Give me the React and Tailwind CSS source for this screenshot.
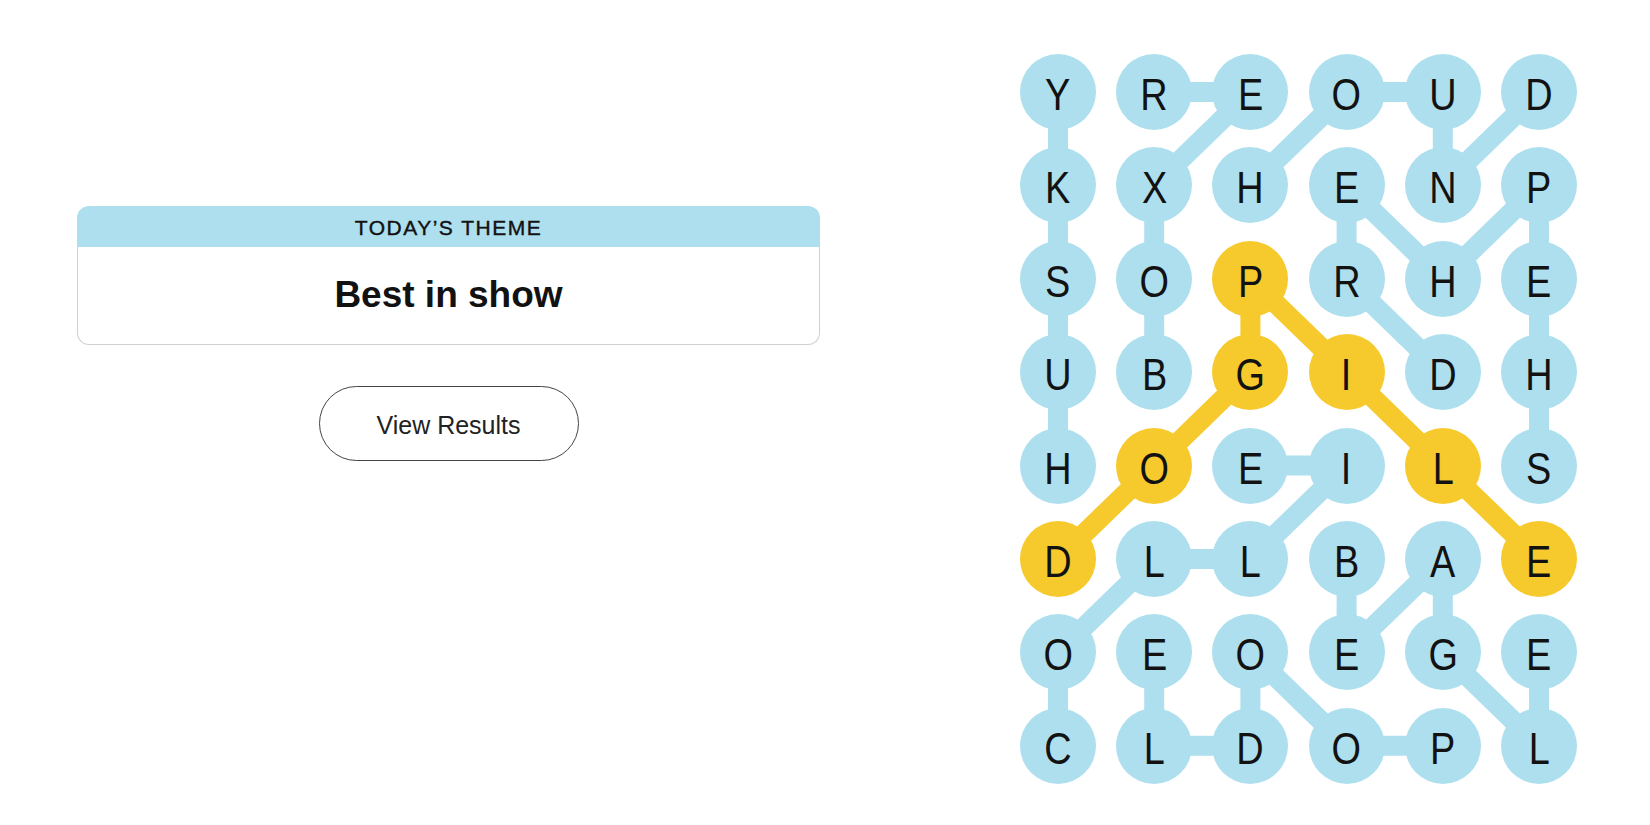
import React from "react";

const ROWS = [
  "YREOUD",
  "KXHENP",
  "SOPRHE",
  "UBGIDH",
  "HOEILS",
  "DLLBAE",
  "OEOEGE",
  "CLDOPL",
];

const BLUE = "#aedfee";
const YELLOW = "#f6ca2c";

const SPAN = new Set(["5,0", "4,1", "3,2", "2,2", "3,3", "4,4", "5,5"]);

const PATHS = [
  { c: BLUE, p: [[0, 0], [1, 0], [2, 0], [3, 0], [4, 0]] },
  { c: BLUE, p: [[0, 1], [0, 2], [1, 1], [2, 1], [3, 1]] },
  { c: BLUE, p: [[1, 2], [0, 3], [0, 4], [1, 4], [0, 5]] },
  { c: BLUE, p: [[4, 5], [3, 5], [2, 5], [1, 5], [2, 4], [1, 3], [2, 3], [3, 4]] },
  { c: BLUE, p: [[7, 0], [6, 0], [5, 1], [5, 2], [4, 3], [4, 2]] },
  { c: BLUE, p: [[5, 3], [6, 3], [5, 4], [6, 4], [7, 5], [6, 5]] },
  { c: BLUE, p: [[7, 4], [7, 3], [6, 2], [7, 2], [7, 1], [6, 1]] },
  { c: YELLOW, p: [[5, 0], [4, 1], [3, 2], [2, 2], [3, 3], [4, 4], [5, 5]] },
];

const PX = 96.2;
const PY = 93.4;
const R = 38;

function Board() {
  const w = 5 * PX + 2 * R;
  const h = 7 * PY + 2 * R;
  return (
    <div className="relative">
      <svg
        className="absolute left-0 top-0"
        width={w}
        height={h}
        viewBox={`0 0 ${w} ${h}`}
      >
        {PATHS.map((path, i) =>
          path.p.slice(1).map((pt, j) => {
            const a = path.p[j];
            return (
              <line
                key={`${i}-${j}`}
                x1={R + a[1] * PX}
                y1={R + a[0] * PY}
                x2={R + pt[1] * PX}
                y2={R + pt[0] * PY}
                stroke={path.c}
                strokeWidth="20"
              />
            );
          })
        )}
      </svg>
      <div className="relative grid grid-cols-[repeat(6,76px)] gap-x-[20.2px] gap-y-[17.4px]">
        {ROWS.map((row, r) =>
          row.split("").map((ch, c) => (
            <div
              key={`${r}-${c}`}
              className={`flex h-[76px] w-[76px] items-center justify-center rounded-full ${
                SPAN.has(`${r},${c}`) ? "bg-[#f6ca2c]" : "bg-[#aedfee]"
              }`}
            >
              <span className="translate-y-[3px] scale-x-[0.86] text-[44px] leading-none text-[#121212]">
                {ch}
              </span>
            </div>
          ))
        )}
      </div>
    </div>
  );
}

export default function App() {
  return (
    <div
      className="flex h-[825px] w-[1650px] bg-white"
      style={{ fontFamily: '"Liberation Sans", Arial, sans-serif' }}
    >
      <div className="flex w-[897px] flex-col items-center px-[77px] pt-[206px]">
        <div className="w-full">
          <div className="flex h-[41px] items-center justify-center rounded-t-xl bg-[#aedfee] pt-[2px] text-[21px] tracking-[1.5px] text-[#121212] [-webkit-text-stroke:0.4px_#121212]">
            TODAY’S THEME
          </div>
          <div className="flex h-[98px] items-center justify-center rounded-b-xl border-x border-b border-[#d0d0d0] pb-[2px] text-[37px] font-bold text-[#121212]">
            Best in show
          </div>
        </div>
        <button className="mt-[41px] flex h-[75px] w-[260px] items-center justify-center rounded-full border border-[#444] bg-white pt-[5px] text-[25px] text-[#222]">
          View Results
        </button>
      </div>
      <div className="pl-[123px] pt-[54px]">
        <Board />
      </div>
    </div>
  );
}
